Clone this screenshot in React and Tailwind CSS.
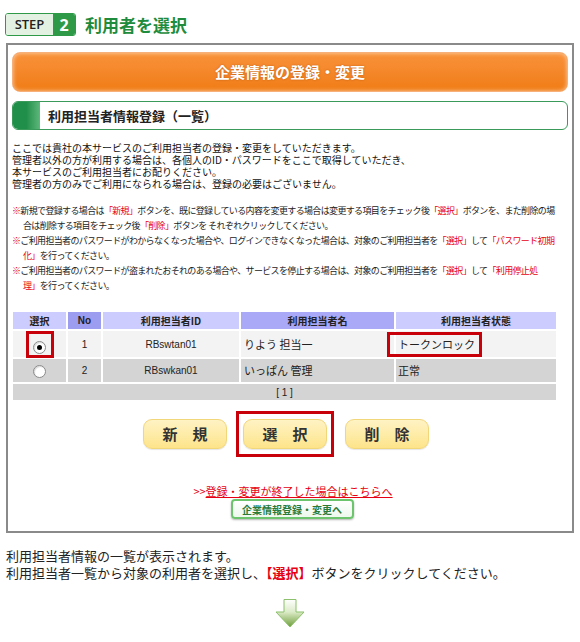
import React from "react";

const R = ({ children }) => <span className="text-[#e60012]">{children}</span>;

function Radio({ checked }) {
  return (
    <span className="inline-flex w-[13px] h-[13px] rounded-full border border-[#8a8a8a] bg-white items-center justify-center shadow-[inset_1px_1px_1px_rgba(0,0,0,0.15)]">
      {checked && <span className="w-[5px] h-[5px] rounded-full bg-black" />}
    </span>
  );
}

const btn = "w-[84px] h-[30px] rounded-[9px] border border-[#f2d67a] bg-gradient-to-b from-[#fff3c4] to-[#fde48a] text-[15px] font-bold text-[#333] shadow-[0_1px_1px_rgba(0,0,0,0.1)]";

export default function App() {
  return (
    <div className="w-[580px] h-[642px] bg-white relative overflow-hidden font-['Noto_Sans_CJK_JP',sans-serif] text-[#222]">
      {/* STEP header */}
      <div className="flex items-center pt-[13px] pl-[5px] h-[36px]">
        <div className="flex h-[23px] rounded-[3px] border border-[#2e9a48] overflow-hidden">
          <div className="w-[47px] bg-[#e3f1e3] flex items-center justify-center text-[13px] font-['Open_Sans',sans-serif] font-semibold text-[#222] leading-none">STEP</div>
          <div className="w-[22px] bg-[#2e9a48] flex items-center justify-center text-white text-[16px] font-bold font-['Open_Sans',sans-serif] leading-none">2</div>
        </div>
        <div className="ml-[9px] text-[17px] font-bold text-[#1e8c3c] leading-none">利用者を選択</div>
      </div>

      {/* Panel */}
      <div className="mx-[6px] mt-[7px] h-[490px] border-2 border-[#8a8a8a] px-[4px] pt-[7px]">
        <div className="h-[40px] rounded-[8px] border border-[#f7b07a] bg-gradient-to-b from-[#f9923a] to-[#f07c12] shadow-[inset_0_0_4px_rgba(255,255,255,0.6)] flex items-center justify-center">
          <span className="text-white font-bold text-[15px] [text-shadow:0_0_2px_rgba(150,60,0,0.6)]">企業情報の登録・変更</span>
        </div>

        <div className="mt-[9px] h-[29px] rounded-[6px] border border-[#3a9a5a] flex items-center overflow-hidden">
          <div className="w-[27px] h-full bg-gradient-to-r from-[#1f8f4a] via-[#1f8f4a] to-[#5cb87c]" />
          <div className="ml-[8px] text-[13px] font-bold text-[#222]">利用担当者情報登録（一覧）</div>
        </div>

        <div className="mt-[12px] text-[10px] leading-[12px] text-[#111] whitespace-nowrap">
          <div className="h-[12px]">ここでは貴社の本サービスのご利用担当者の登録・変更をしていただきます。</div>
          <div className="h-[12px]">管理者以外の方が利用する場合は、各個人のID・パスワードをここで取得していただき、</div>
          <div className="h-[12px]">本サービスのご利用担当者にお配りください。</div>
          <div className="h-[12px]">管理者の方のみでご利用になられる場合は、登録の必要はございません。</div>
        </div>

        <div className="mt-[13px] text-[9px] leading-[15px] text-[#222] whitespace-nowrap tracking-[-0.65px]">
          <div><R>※</R>新規で登録する場合は<R>「新規」</R>ボタンを、既に登録している内容を変更する場合は変更する項目をチェック後<R>「選択」</R>ボタンを、また削除の場</div>
          <div className="pl-[11px]">合は削除する項目をチェック後<R>「削除」</R>ボタンを それぞれクリックしてください。</div>
          <div><R>※</R>ご利用担当者のパスワードがわからなくなった場合や、ログインできなくなった場合は、対象のご利用担当者を<R>「選択」</R>して<R>「パスワード初期</R></div>
          <div className="pl-[11px]"><R>化」</R>を行ってください。</div>
          <div><R>※</R>ご利用担当者のパスワードが盗まれたおそれのある場合や、サービスを停止する場合は、対象のご利用担当者を<R>「選択」</R>して<R>「利用停止処</R></div>
          <div className="pl-[11px]"><R>理」</R>を行ってください。</div>
        </div>

        {/* Table */}
        <table className="mt-[17px] -ml-[1px] border-separate border-spacing-[2px] text-[10px]">
          <thead>
            <tr className="h-[17px] font-bold text-[#222]">
              <th className="w-[53px] bg-[#ccccff] p-0 font-bold">選択</th>
              <th className="w-[33px] bg-[#9c9cf0] p-0 font-bold font-['Liberation_Sans',sans-serif]">No</th>
              <th className="w-[136px] bg-[#ccccff] p-0 font-bold">利用担当者ID</th>
              <th className="w-[153px] bg-[#a9a9f7] p-0 font-bold">利用担当者名</th>
              <th className="w-[160px] bg-[#ccccff] p-0 font-bold">利用担当者状態</th>
            </tr>
          </thead>
          <tbody>
            <tr className="h-[26px] bg-[#f3f3f3]">
              <td className="p-0 text-center relative">
                <span className="absolute left-[13px] top-[0px] w-[28px] h-[27px] border-[3px] border-[#c8000a]" />
                <span className="relative top-[2px]"><Radio checked /></span>
              </td>
              <td className="p-0 text-center font-['Liberation_Sans',sans-serif] text-[10px]">1</td>
              <td className="p-0 text-center font-['Liberation_Sans',sans-serif] text-[10px]">RBswtan01</td>
              <td className="p-0 pl-[3px] text-[11px]">りよう 担当一</td>
              <td className="p-0 pl-[2px] text-[11px] relative">
                <span className="absolute left-[-9px] top-[1px] w-[95px] h-[25px] border-[3px] border-[#c8000a]" />
                トークンロック
              </td>
            </tr>
            <tr className="h-[23px] bg-[#d4d4d4]">
              <td className="p-0 text-center"><span className="relative top-[2px]"><Radio /></span></td>
              <td className="p-0 text-center font-['Liberation_Sans',sans-serif]">2</td>
              <td className="p-0 text-center font-['Liberation_Sans',sans-serif]">RBswkan01</td>
              <td className="p-0 pl-[3px] text-[11px]">いっぱん 管理</td>
              <td className="p-0 pl-[2px] text-[11px]">正常</td>
            </tr>
            <tr className="h-[16px] bg-[#d4d4d4]">
              <td colSpan={5} className="p-0 text-center text-[10px] font-['Liberation_Sans',sans-serif]">[ 1 ]</td>
            </tr>
          </tbody>
        </table>

        {/* Buttons */}
        <div className="mt-[9px] flex items-center pl-[131px]">
          <button className={btn}>新　規</button>
          <div className="ml-[9px] px-[4px] py-[5px] border-[3px] border-[#c8000a]">
            <button className={btn}>選　択</button>
          </div>
          <button className={"ml-[11px] " + btn}>削　除</button>
        </div>

        <div className="mt-[28px] flex flex-col items-center">
          <div className="text-[11px] leading-[13px] text-[#e60012] pl-[6px]">
            &gt;&gt;<span className="underline">登録・変更が終了した場合はこちらへ</span>
          </div>
          <div className="mt-[1px] ml-[4px] w-[123px] h-[20px] rounded-[4px] border-2 border-[#6cc46c] bg-gradient-to-b from-white to-[#eef8ee] shadow-[0_1px_2px_rgba(0,0,0,0.3)] flex items-center justify-center text-[10px] font-bold text-[#2a7a3a]">
            企業情報登録・変更へ
          </div>
        </div>
      </div>

      {/* Bottom text */}
      <div className="mt-[14px] pl-[6px] text-[13px] leading-[17px] text-[#222]">
        <div>利用担当者情報の一覧が表示されます。</div>
        <div>利用担当者一覧から対象の利用者を選択し、<span className="text-[#e60012] font-bold">【選択】</span>ボタンをクリックしてください。</div>
      </div>

      {/* Arrow */}
      <div className="flex justify-center mt-[18px]">
        <svg width="30" height="29" viewBox="0 0 30 29">
          <defs>
            <linearGradient id="ag" x1="0" y1="0" x2="0" y2="1">
              <stop offset="0" stopColor="#ffffff" />
              <stop offset="0.45" stopColor="#dcebc8" />
              <stop offset="1" stopColor="#6e9e3a" />
            </linearGradient>
          </defs>
          <polygon points="9,0.5 21,0.5 21,13 29,13 15,28 1,13 9,13" fill="url(#ag)" stroke="#8cc06c" strokeWidth="1" />
        </svg>
      </div>
    </div>
  );
}
